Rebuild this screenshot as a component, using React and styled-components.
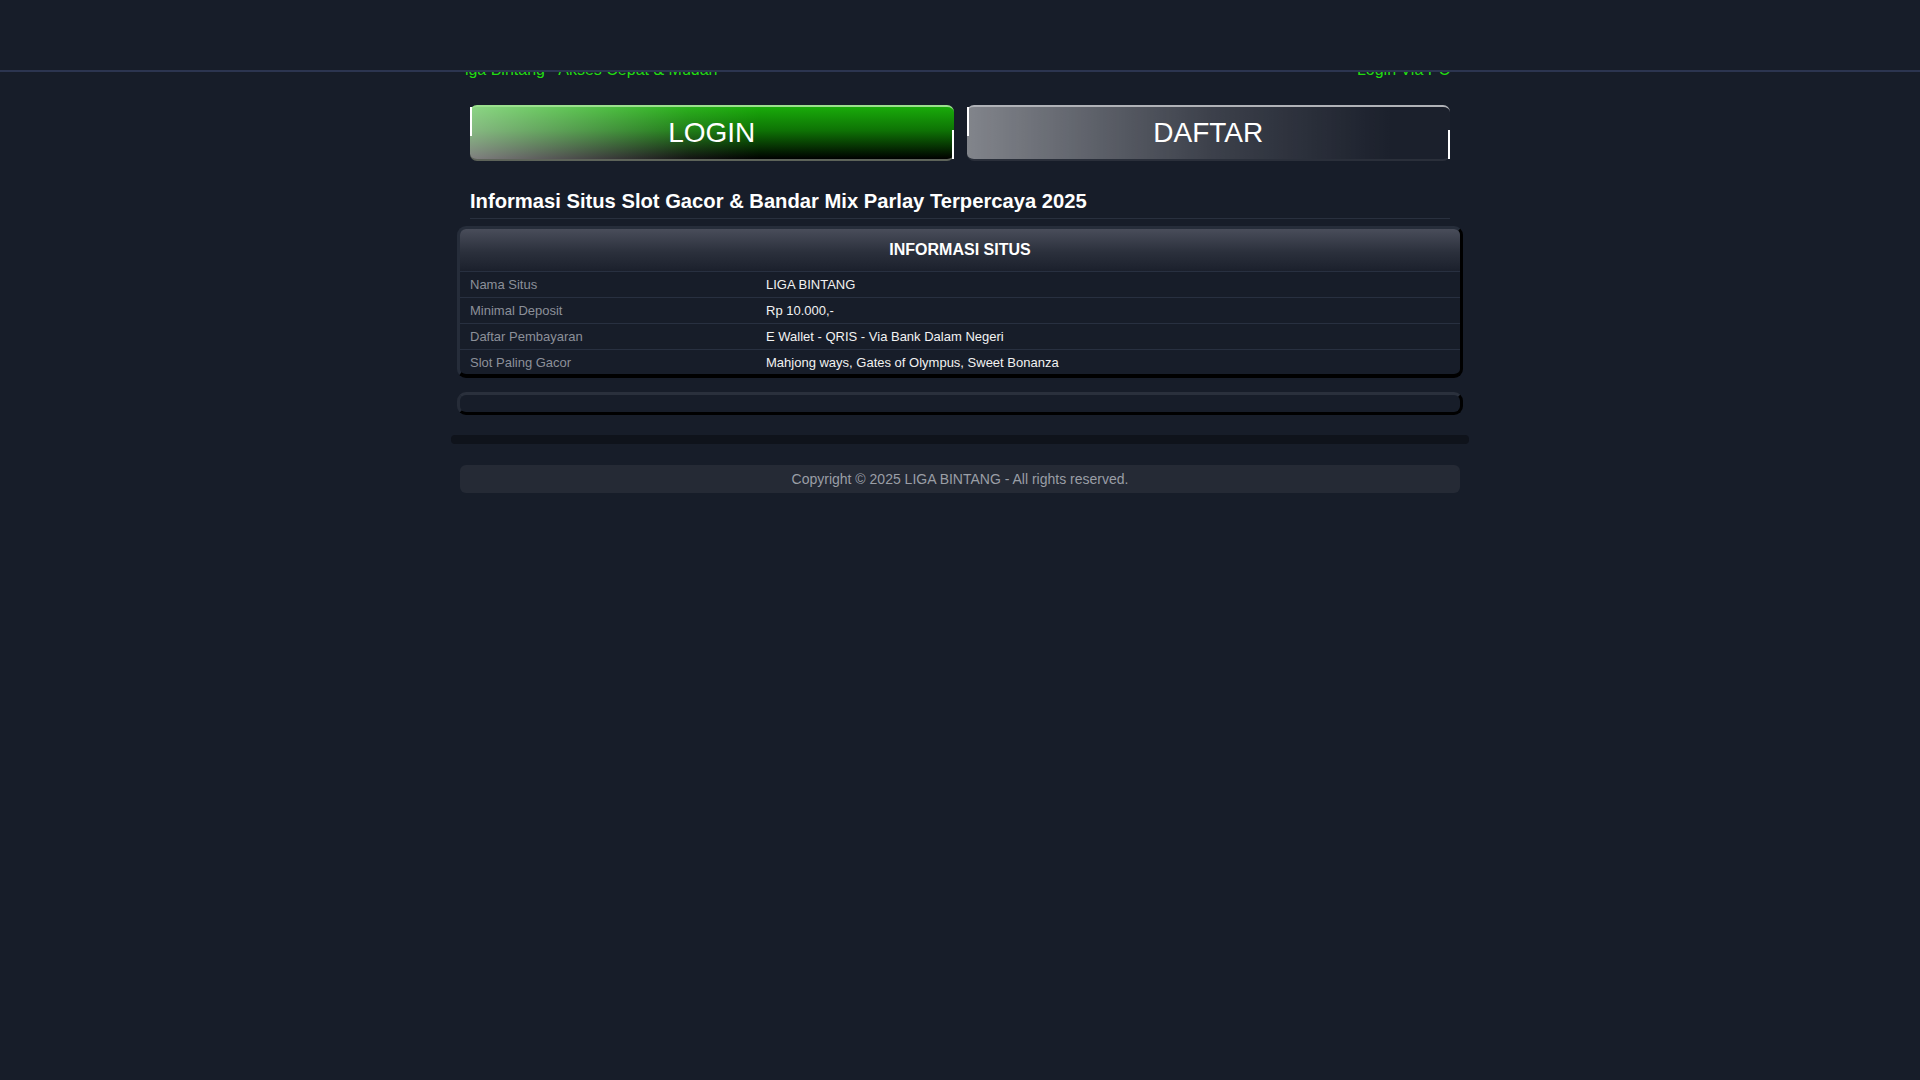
import React from "react";
import styled, { createGlobalStyle } from "styled-components";

const GlobalStyle = createGlobalStyle`
	html, body {
		margin: 0;
		padding: 0;
		background: #171d29;
		font-family: "Liberation Sans", Arial, sans-serif;
	}
`;

const infoRows = [
	{ label: "Nama Situs", value: "LIGA BINTANG" },
	{ label: "Minimal Deposit", value: "Rp 10.000,-" },
	{ label: "Daftar Pembayaran", value: "E Wallet - QRIS - Via Bank Dalam Negeri" },
	{ label: "Slot Paling Gacor", value: "Mahjong ways, Gates of Olympus, Sweet Bonanza" },
];

export default function App() {
	return (
		<>
			<GlobalStyle />
			<TopBar />

			<Page>
				<Marquee>
					<MarqueeText>Liga Bintang - Akses Cepat &amp; Mudah</MarqueeText>
					<MarqueeText>Login Via PC</MarqueeText>
				</Marquee>

				<ButtonRow>
					<BigButton variant="login">LOGIN</BigButton>
					<BigButton variant="daftar">DAFTAR</BigButton>
				</ButtonRow>

				<Heading>Informasi Situs Slot Gacor &amp; Bandar Mix Parlay Terpercaya 2025</Heading>

				<InfoBox>
					<InfoHeader>INFORMASI SITUS</InfoHeader>
					{infoRows.map((row) => (
						<InfoRow key={row.label}>
							<Label>{row.label}</Label>
							<Value>{row.value}</Value>
						</InfoRow>
					))}
				</InfoBox>

				<EmptyBox />

				<Divider />

				<Footer>Copyright © 2025 LIGA BINTANG - All rights reserved.</Footer>
			</Page>
		</>
	);
}

// fixed header, it sits over the top of the marquee line
const TopBar = styled.header`
	position: fixed;
	top: 0;
	left: 0;
	right: 0;
	z-index: 5;
	height: 70px;
	background: #171d29;
	border-bottom: 2px solid #2c3550;
`;

const Page = styled.main`
	width: 1000px;
	margin: 0 auto;
	padding-top: 61px;
	padding-bottom: 40px;
`;

const Marquee = styled.div`
	display: flex;
	justify-content: space-between;
	margin: 0 10px 0 5px;
	overflow: hidden;
	line-height: 18px;
`;

const MarqueeText = styled.span`
	color: #22dc12;
	font-size: 16px;
	white-space: nowrap;

	&:first-child {
		margin-left: -9px;
	}
`;

const ButtonRow = styled.div`
	display: flex;
	gap: 13px;
	margin: 26px 10px 0;
`;

const BigButton = styled.a`
	position: relative;
	flex: 1;
	height: 52px;
	display: flex;
	align-items: center;
	justify-content: center;
	box-sizing: content-box;
	border-radius: 7px;
	border-top: 2px solid ${(p) => (p.variant === "login" ? "#9be08e" : "#b0b2b7")};
	border-bottom: 2px solid ${(p) => (p.variant === "login" ? "#5d6359" : "#2a2f3a")};
	background: ${(p) =>
		p.variant === "login"
			? "linear-gradient(to right, rgba(255,255,255,0.5) 0%, rgba(255,255,255,0.08) 45%, rgba(255,255,255,0) 60%), linear-gradient(to bottom, #19ab0a 0%, #0e7305 45%, #000 100%)"
			: "linear-gradient(to right, rgba(255,255,255,0.45) 0%, rgba(255,255,255,0.15) 50%, rgba(255,255,255,0) 88%), #1b202c"};
	color: #ffffff;
	font-size: 28px;
	cursor: pointer;

	&::before,
	&::after {
		content: "";
		position: absolute;
		width: 2px;
		height: 55%;
		background: #ffffff;
	}

	&::before {
		left: 0;
		top: 0;
	}

	&::after {
		right: 0;
		bottom: 0;
	}
`;

const Heading = styled.h1`
	margin: 28px 10px 0;
	padding-bottom: 5px;
	border-bottom: 1px solid #29303e;
	color: #ffffff;
	font-size: 20.2px;
	font-weight: bold;
	line-height: 24px;
`;

const InfoBox = styled.div`
	margin: 7px -3px 0 -3px;
	border-top: 3px solid #262d3a;
	border-left: 3px solid #262d3a;
	border-right: 3px solid #000;
	border-bottom: 4px solid #000;
	border-radius: 9px;
	overflow: hidden;
	background: #171d29;
`;

const InfoHeader = styled.div`
	height: 42px;
	display: flex;
	align-items: center;
	justify-content: center;
	background: linear-gradient(to bottom, #494d5a 0%, #2b303c 55%, #1b202c 100%);
	color: #ffffff;
	font-size: 16px;
	font-weight: bold;
`;

const InfoRow = styled.div`
	display: grid;
	grid-template-columns: 306px 1fr;
	height: 25px;
	align-items: center;
	border-top: 1px solid #283040;
	font-size: 13px;

	&:last-child {
		height: 24px;
	}
`;

const Label = styled.span`
	padding-left: 10px;
	color: #8c9099;
`;

const Value = styled.span`
	color: #f2f2f2;
`;

const EmptyBox = styled.div`
	margin: 14px -3px 0;
	height: 17px;
	border-top: 3px solid #2a303c;
	border-left: 3px solid #262c38;
	border-right: 3px solid #000;
	border-bottom: 3px solid #000;
	border-radius: 9px;
	background: #171d29;
`;

const Divider = styled.div`
	margin: 20px -9px 0;
	height: 9px;
	border-radius: 4px;
	background: #0f131b;
`;

const Footer = styled.footer`
	margin: 21px 0 0;
	height: 28px;
	display: flex;
	align-items: center;
	justify-content: center;
	border-radius: 6px;
	background: #252a35;
	color: #9a9ea6;
	font-size: 14px;
`;
